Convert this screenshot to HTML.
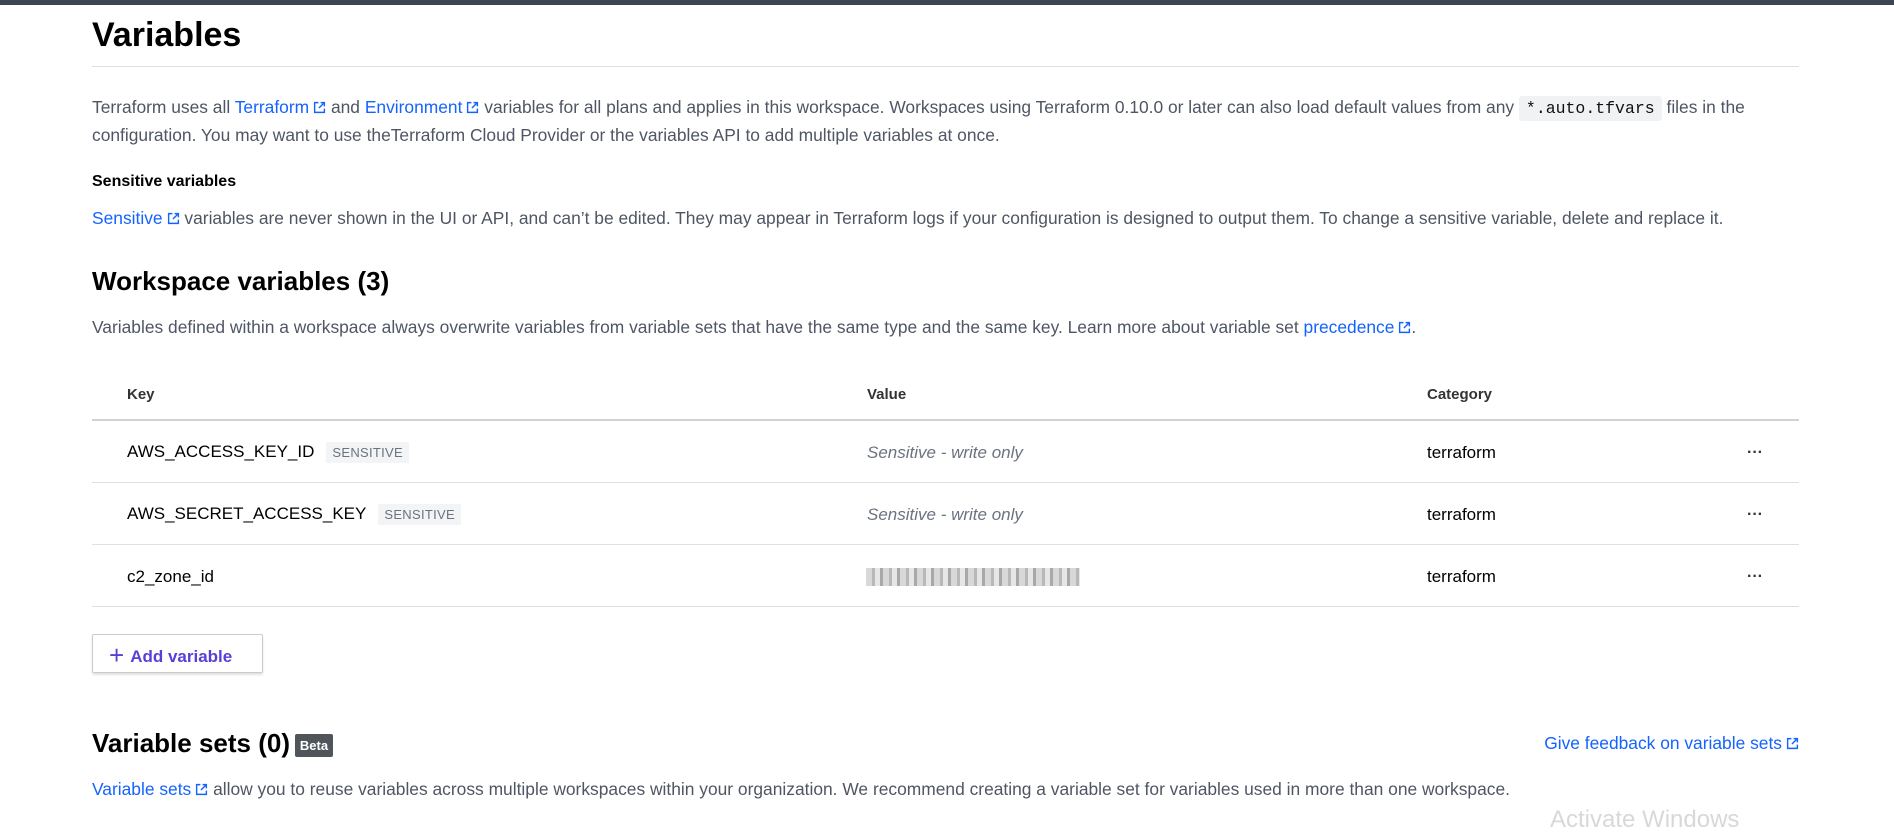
<!DOCTYPE html>
<html><head><meta charset="utf-8"><style>
*{margin:0;padding:0;box-sizing:border-box}
body{width:1894px;height:813px;overflow:hidden;background:#fff;font-family:"Liberation Sans",sans-serif;color:#4f5663;position:relative}
.bar{position:absolute;left:0;top:0;width:1894px;height:5px;background:#3d4652}
.a{position:absolute;white-space:nowrap}
h1{position:absolute;left:92px;top:16px;font-size:34px;font-weight:bold;color:#000}
.hr{position:absolute;left:92px;width:1707px;height:1px;background:#dcdfe3}
p{font-size:17.4px}
a{color:#1563ff;text-decoration:none}
.ext{display:inline-block;width:13px;height:13px;vertical-align:-1px;margin-left:4px}
code{font-family:"Liberation Mono",monospace;background:#f1f2f4;color:#111;padding:3px 7px;border-radius:3px;font-size:16.5px}
.h2{font-size:26px;font-weight:bold;color:#000}
.th{font-size:15px;font-weight:bold;color:#333}
.td{font-size:17px;color:#000}
.tag{font-size:13px;color:#6b7280;background:#f3f4f6;padding:3px 6px;margin-left:12px;letter-spacing:.3px}
.it{font-style:italic;color:#6b7280;font-size:17px}
.dots{font-size:16px;color:#333;font-weight:bold}
</style></head><body>
<div class="bar"></div>
<h1>Variables</h1>
<div class="hr" style="top:66px"></div>
<p class="a" style="left:92px;top:97px">Terraform uses all <a>Terraform<svg class="ext" viewBox="0 0 12 12"><path d="M5 1.5H1.5v9h9V7M7 1.5h3.5V5M10.5 1.5L5.5 6.5" fill="none" stroke="#1563ff" stroke-width="1.3"/></svg></a> and <a>Environment<svg class="ext" viewBox="0 0 12 12"><path d="M5 1.5H1.5v9h9V7M7 1.5h3.5V5M10.5 1.5L5.5 6.5" fill="none" stroke="#1563ff" stroke-width="1.3"/></svg></a> variables for all plans and applies in this workspace. Workspaces using Terraform 0.10.0 or later can also load default values from any <code>*.auto.tfvars</code> files in the</p>
<p class="a" style="left:92px;top:125px">configuration. You may want to use theTerraform Cloud Provider or the variables API to add multiple variables at once.</p>
<p class="a" style="left:92px;top:173px;color:#000;font-weight:bold;font-size:16px">Sensitive variables</p>
<p class="a" style="left:92px;top:208px"><a>Sensitive<svg class="ext" viewBox="0 0 12 12"><path d="M5 1.5H1.5v9h9V7M7 1.5h3.5V5M10.5 1.5L5.5 6.5" fill="none" stroke="#1563ff" stroke-width="1.3"/></svg></a> variables are never shown in the UI or API, and can’t be edited. They may appear in Terraform logs if your configuration is designed to output them. To change a sensitive variable, delete and replace it.</p>
<div class="a h2" style="left:92px;top:266px">Workspace variables (3)</div>
<p class="a" style="left:92px;top:317px">Variables defined within a workspace always overwrite variables from variable sets that have the same type and the same key. Learn more about variable set <a>precedence<svg class="ext" viewBox="0 0 12 12"><path d="M5 1.5H1.5v9h9V7M7 1.5h3.5V5M10.5 1.5L5.5 6.5" fill="none" stroke="#1563ff" stroke-width="1.3"/></svg></a>.</p>
<div class="a th" style="left:127px;top:386px">Key</div>
<div class="a th" style="left:867px;top:386px">Value</div>
<div class="a th" style="left:1427px;top:386px">Category</div>
<div class="hr" style="top:419px;height:2px;background:#cfd2d6"></div>
<div class="a td" style="left:127px;top:442px">AWS_ACCESS_KEY_ID<span class="tag">SENSITIVE</span></div>
<div class="a it" style="left:867px;top:443px">Sensitive - write only</div>
<div class="a td" style="left:1427px;top:443px">terraform</div>
<div class="a dots" style="left:1747px;top:444px">···</div>
<div class="hr" style="top:482px"></div>
<div class="a td" style="left:127px;top:504px">AWS_SECRET_ACCESS_KEY<span class="tag">SENSITIVE</span></div>
<div class="a it" style="left:867px;top:505px">Sensitive - write only</div>
<div class="a td" style="left:1427px;top:505px">terraform</div>
<div class="a dots" style="left:1747px;top:506px">···</div>
<div class="hr" style="top:544px"></div>
<div class="a td" style="left:127px;top:567px">c2_zone_id</div>
<div class="a" style="left:866px;top:568px;width:214px;height:18px;background:repeating-linear-gradient(90deg,#d8d8d8 0 6px,#b8b8b8 6px 9px,#e6e6e6 9px 14px,#a8a8a8 14px 17px)"></div>
<div class="a td" style="left:1427px;top:567px">terraform</div>
<div class="a dots" style="left:1747px;top:568px">···</div>
<div class="hr" style="top:606px"></div>
<div class="a" style="left:92px;top:634px;width:171px;height:39px;border:1px solid #c8cbd0;border-radius:2px;box-shadow:0 2px 2px rgba(0,0,0,.12);color:#5a3fd6;font-weight:bold;font-size:17px;padding:8px 0 0 16px"><span style="font-size:26px;position:relative;top:2px;margin-right:6px;font-weight:normal;line-height:20px">+</span>Add variable</div>
<div class="a h2" style="left:92px;top:728px">Variable sets (0)</div>
<div class="a" style="left:295px;top:734px;width:38px;height:23px;background:#50555c;color:#fff;font-size:13px;font-weight:bold;text-align:center;line-height:23px;border-radius:2px">Beta</div>
<p class="a" style="right:95px;top:733px"><a>Give feedback on variable sets<svg class="ext" viewBox="0 0 12 12"><path d="M5 1.5H1.5v9h9V7M7 1.5h3.5V5M10.5 1.5L5.5 6.5" fill="none" stroke="#1563ff" stroke-width="1.3"/></svg></a></p>
<p class="a" style="left:92px;top:779px"><a>Variable sets<svg class="ext" viewBox="0 0 12 12"><path d="M5 1.5H1.5v9h9V7M7 1.5h3.5V5M10.5 1.5L5.5 6.5" fill="none" stroke="#1563ff" stroke-width="1.3"/></svg></a> allow you to reuse variables across multiple workspaces within your organization. We recommend creating a variable set for variables used in more than one workspace.</p>
<div class="a" style="left:1550px;top:806px;font-size:24px;color:#d8d8d8">Activate Windows</div>
</body></html>
